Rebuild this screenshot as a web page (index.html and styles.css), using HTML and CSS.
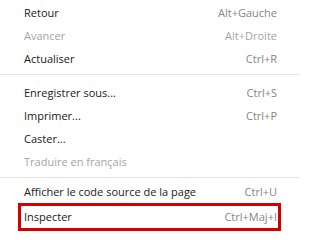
FILE: index.html
```html
<!DOCTYPE html>
<html lang="fr">
<head>
<meta charset="utf-8">
<title>Menu contextuel</title>
<link rel="stylesheet" href="styles.css">
</head>
<body>
<div class="menu">
  <div class="item"><span class="label">Retour</span><span class="key">Alt+Gauche</span></div>
  <div class="item disabled"><span class="label">Avancer</span><span class="key">Alt+Droite</span></div>
  <div class="item"><span class="label">Actualiser</span><span class="key">Ctrl+R</span></div>
  <div class="sep sep-a"></div>
  <div class="item"><span class="label">Enregistrer sous...</span><span class="key">Ctrl+S</span></div>
  <div class="item"><span class="label">Imprimer...</span><span class="key">Ctrl+P</span></div>
  <div class="item"><span class="label">Caster...</span></div>
  <div class="item disabled"><span class="label">Traduire en français</span></div>
  <div class="sep sep-b"></div>
  <div class="item short"><span class="label">Afficher le code source de la page</span><span class="key">Ctrl+U</span></div>
  <div class="highlight">
    <div class="item inner"><span class="label">Inspecter</span><span class="key">Ctrl+Maj+I</span></div>
  </div>
</div>
</body>
</html>
```
FILE: styles.css
```css
html, body {
  margin: 0;
  padding: 0;
  background: #ffffff;
}
body {
  width: 300px;
  height: 232px;
  overflow: hidden;
  font-family: "Open Sans", "Noto Sans", "DejaVu Sans", sans-serif;
  font-size: 11px;
  color: #202020;
}
.menu {
  display: flex;
  flex-direction: column;
  padding-top: 1px;
}
.item {
  display: flex;
  justify-content: space-between;
  align-items: center;
  height: 23px;
  line-height: 23px;
  padding: 0 23px 0 24px;
  white-space: nowrap;
}
.item.short {
  height: 22px;
  line-height: 22px;
}
.key {
  color: #858585;
}
.disabled .label,
.disabled .key {
  color: #a3a3a3;
}
.sep {
  height: 1px;
  background: #e3e3e3;
}
.sep-a {
  margin: 4px 0 6px;
}
.sep-b {
  margin: 4px 0 3px;
}
.highlight {
  margin: 0 19px 0 18px;
  border: 3px solid #d40000;
}
.item.inner {
  height: 22px;
  line-height: 22px;
  padding: 0 1px 0 3px;
}
```
